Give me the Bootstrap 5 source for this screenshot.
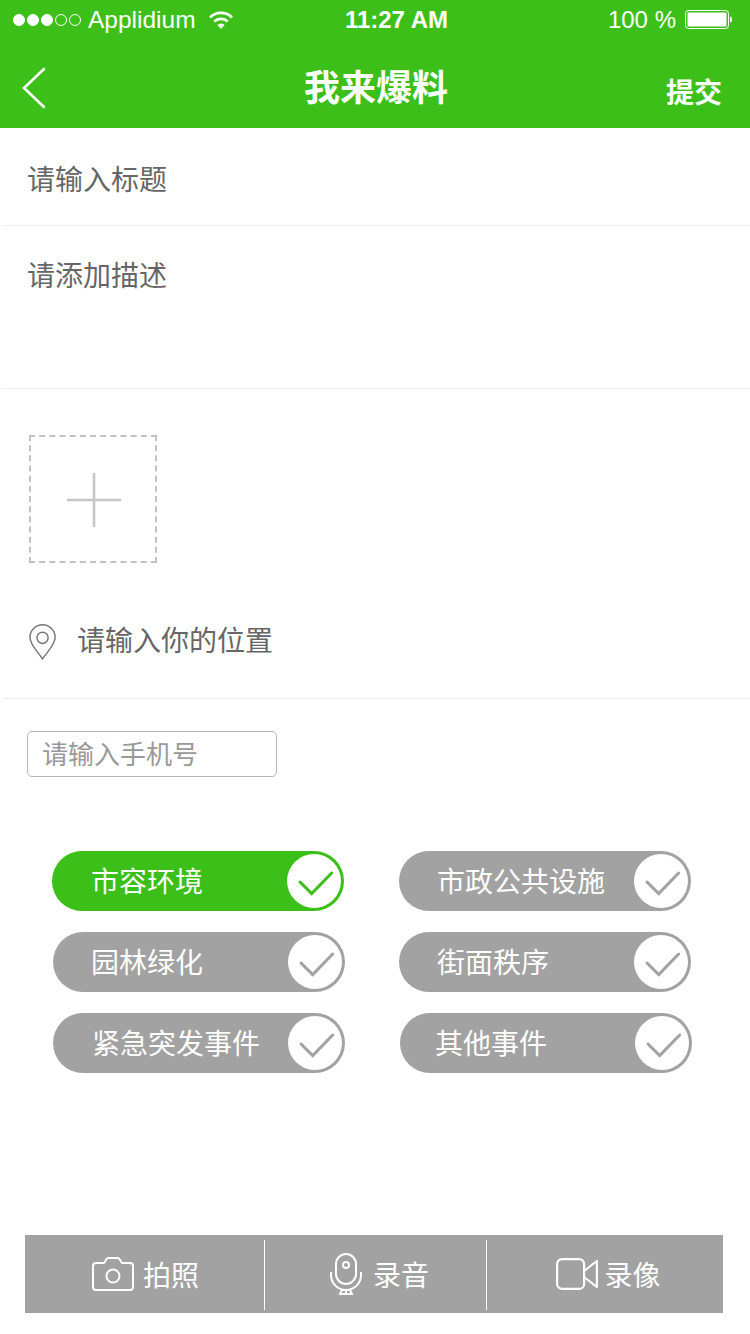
<!DOCTYPE html>
<html lang="zh-CN">
<head>
  <meta charset="UTF-8">
  <title>我来爆料</title>
  <link href="https://cdn.jsdelivr.net/npm/bootstrap@5.3.3/dist/css/bootstrap.min.css" rel="stylesheet">
  <style>
    :root { --leaf: #3dbf1a; --ash: #a2a2a2; }
    body { width: 750px; height: 1334px; overflow: hidden; background: #fff; color: #666;
      font-family: "Liberation Sans", "Noto Sans CJK SC", sans-serif; }
    .top-bar { height: 128px; background: var(--leaf); color: #fff; }
    .status-row { height: 40px; padding: 0 17px 0 13px; font-size: 24.5px; line-height: 40px; font-weight: 300; }
    .status-left { width: 327px; }
    .status-right { width: 280px; font-size: 24px; }
    .status-time { font-size: 24px; font-weight: 700; }
    .sig { width: 12px; height: 12px; border: 1px solid #fff; border-radius: 50%; margin-right: 2px; }
    .sig.on { background: #fff; }
    .carrier { margin-left: 5px; }
    .wifi-mark { margin-left: 12px; }
    .battery-label { margin-right: 9px; }
    .title-row { height: 88px; padding: 8px 29px 0 22px; }
    .title-row h1 { font-size: 36px; font-weight: 700; margin: 0; line-height: 40px; position: relative; top: 1px; }
    .submit-link { font-size: 28px; font-weight: 700; color: #fff; text-decoration: none; width: 55px; white-space: nowrap; position: relative; top: 6px; }
    .back-slot { width: 64px; }
    .field-line { border: 0; border-radius: 0; box-shadow: none !important; padding: 0; font-size: 28px; line-height: 36px; color: #666; background: transparent; }
    .field-line::placeholder { color: #666; opacity: 1; }
    .title-field { height: 98px; margin-left: 2px; padding: 35px 0 0 25px; border-bottom: 1px solid #eee; }
    .title-field .field-line { height: 36px; }
    .desc-field { height: 163px; margin-left: 2px; padding: 33px 0 0 25px; border-bottom: 1px solid #eee; }
    .desc-field .field-line { resize: none; height: 100px; }
    .upload-box { width: 128px; height: 128px; margin: 46px 0 0 29px; padding-top: 2px; border: 2px dashed #c2c2c2; }
    .plus-mark { margin-left: 2px; }
    .place-row { height: 136px; margin-left: 2px; padding: 22px 0 0 27px; border-bottom: 1px solid #eee; gap: 21px; }
    .place-row .field-line { height: 36px; }
    .phone-field { width: 250px; height: 46px; margin: 32px 0 0 27px; padding: 3px 14px 0; border: 1px solid #b5b5b5; border-radius: 5px; font-size: 26px; color: #999; box-shadow: none !important; }
    .phone-field::placeholder { color: #999; opacity: 1; }
    .pill-stack { margin-top: 74px; gap: 21px; }
    .pill-row { gap: 55px; padding-left: 53px; }
    .pill-row.first { padding-left: 52px; }
    .pill-row.tight { gap: 54px; }
    .tag-pill { width: 292px; height: 60px; border-radius: 30px; background: var(--ash); color: #fff; border: 0; padding: 0 3px 0 38px; font-size: 28px; line-height: 56px; }
    .tag-pill.picked { background: var(--leaf); padding-left: 39px; }
    .tag-pill.near { padding-left: 35px; }
    .tag-pill.far { padding-left: 39px; }
    .tag-text { padding-top: 4px; }
    .knob { width: 54px; height: 54px; border-radius: 50%; background: #fff; }
    .knob svg { display: block; stroke: var(--ash); }
    .picked .knob svg { stroke: var(--leaf); }
    .tool-bar { width: 698px; height: 78px; margin: 162px 0 0 25px; background: var(--ash); color: #fff; padding: 5px 0 3px; }
    .tool-item { gap: 9px; background: transparent; border: 0; color: #fff; font-size: 28px; line-height: 40px; padding: 0; }
    .tool-item span { padding-top: 4px; }
    .tool-item svg { margin-bottom: 2px; }
    .tool-item + .tool-item { border-left: 1px solid #fff; }
    .tool-one { width: 239px; padding-left: 2px; }
    .tool-two { width: 222px; padding-left: 8px; gap: 11px; }
    .tool-three { width: 237px; padding-left: 7px; gap: 6px; }
  </style>
</head>
<body>
  <header class="top-bar">
    <div class="status-row d-flex align-items-center justify-content-between">
      <div class="status-left d-flex align-items-center">
        <span class="sig on"></span><span class="sig on"></span><span class="sig on"></span><span class="sig"></span><span class="sig"></span>
        <span class="carrier">Applidium</span>
        <svg class="wifi-mark" width="26" height="20" viewBox="0 0 26 20" fill="none" stroke="#fff" stroke-width="2.6">
          <path d="M2 7.500a15.500 15.500 0 0 1 22 0"/>
          <path d="M6.300 11.600a9.500 9.500 0 0 1 13.400 0"/>
          <path d="M13 19l-3.600-4a5 5 0 0 1 7.200 0z" fill="#fff" stroke="none"/>
        </svg>
      </div>
      <div class="status-time">11:27 AM</div>
      <div class="status-right d-flex align-items-center justify-content-end">
        <span class="battery-label">100 %</span>
        <svg width="48" height="20" viewBox="0 0 48 20">
          <rect x=".5" y=".5" width="43" height="18" rx="3" fill="none" stroke="#fff"/>
          <rect x="2.500" y="2.500" width="39" height="14" rx="1" fill="#fff"/>
          <path d="M45 6.500c1.500 0 2 1.500 2 3s-.5 3-2 3z" fill="#fff"/>
        </svg>
      </div>
    </div>
    <nav class="title-row d-flex align-items-center justify-content-between">
      <a class="back-slot d-block" href="#" aria-label="返回">
        <svg class="d-block" width="24" height="42" viewBox="0 0 24 42" fill="none" stroke="#fff" stroke-width="2.6" stroke-linecap="round"><path d="M22 2 2 21l20 19"/></svg>
      </a>
      <h1>我来爆料</h1>
      <a class="submit-link" href="#">提交</a>
    </nav>
  </header>

  <form>
    <div class="title-field"><input class="form-control field-line" type="text" placeholder="请输入标题"></div>
    <div class="desc-field"><textarea class="form-control field-line" placeholder="请添加描述"></textarea></div>

    <div class="upload-box d-flex align-items-center justify-content-center">
      <svg class="plus-mark" width="54" height="54" viewBox="0 0 54 54" stroke="#c6c6c6" stroke-width="2.600"><path d="M27 0v54M0 27h54"/></svg>
    </div>

    <div class="place-row d-flex align-items-center">
      <svg width="29" height="38" viewBox="0 0 29 38" fill="none" stroke="#777" stroke-width="1.600">
        <path d="M14.500 37C9 29 1 22 1 14a13.500 13.500 0 0 1 27 0c0 8-8 15-13.500 23z"/>
        <circle cx="14.500" cy="14.500" r="6"/>
      </svg>
      <input class="form-control field-line" type="text" placeholder="请输入你的位置">
    </div>

    <input class="form-control phone-field" type="tel" placeholder="请输入手机号">

    <div class="pill-stack d-flex flex-column">
      <div class="pill-row first d-flex">
        <div class="tag-pill picked d-flex justify-content-between align-items-center"><span class="tag-text">市容环境</span><span class="knob"><svg width="54" height="54" viewBox="0 0 54 54" fill="none" stroke-width="3" stroke-linecap="round"><path d="M13 28l11.700 11.500L44.700 19"/></svg></span></div>
        <div class="tag-pill d-flex justify-content-between align-items-center"><span class="tag-text">市政公共设施</span><span class="knob"><svg width="54" height="54" viewBox="0 0 54 54" fill="none" stroke-width="3" stroke-linecap="round"><path d="M13 28l11.700 11.500L44.700 19"/></svg></span></div>
      </div>
      <div class="pill-row tight d-flex">
        <div class="tag-pill d-flex justify-content-between align-items-center"><span class="tag-text">园林绿化</span><span class="knob"><svg width="54" height="54" viewBox="0 0 54 54" fill="none" stroke-width="3" stroke-linecap="round"><path d="M13 28l11.700 11.500L44.700 19"/></svg></span></div>
        <div class="tag-pill d-flex justify-content-between align-items-center"><span class="tag-text">街面秩序</span><span class="knob"><svg width="54" height="54" viewBox="0 0 54 54" fill="none" stroke-width="3" stroke-linecap="round"><path d="M13 28l11.700 11.500L44.700 19"/></svg></span></div>
      </div>
      <div class="pill-row d-flex">
        <div class="tag-pill far d-flex justify-content-between align-items-center"><span class="tag-text">紧急突发事件</span><span class="knob"><svg width="54" height="54" viewBox="0 0 54 54" fill="none" stroke-width="3" stroke-linecap="round"><path d="M13 28l11.700 11.500L44.700 19"/></svg></span></div>
        <div class="tag-pill near d-flex justify-content-between align-items-center"><span class="tag-text">其他事件</span><span class="knob"><svg width="54" height="54" viewBox="0 0 54 54" fill="none" stroke-width="3" stroke-linecap="round"><path d="M13 28l11.700 11.500L44.700 19"/></svg></span></div>
      </div>
    </div>

    <div class="tool-bar d-flex">
      <button type="button" class="tool-item tool-one d-flex align-items-center justify-content-center">
        <svg width="42" height="34" viewBox="0 0 42 34" fill="none" stroke="#fff" stroke-width="2" stroke-linejoin="round">
          <path d="M4 6h8l3-4.500c.5-.5 1-.5 1.500-.5h9c.5 0 1 0 1.500.5L30 6h8c1.700 0 3 1.300 3 3v21c0 1.700-1.300 3-3 3H4c-1.700 0-3-1.300-3-3V9c0-1.700 1.300-3 3-3z"/>
          <circle cx="21" cy="19" r="6.500"/>
        </svg>
        <span>拍照</span>
      </button>
      <button type="button" class="tool-item tool-two d-flex align-items-center justify-content-center">
        <svg width="32" height="42" viewBox="0 0 32 42" fill="none" stroke="#fff" stroke-width="2">
          <rect x="6" y="1" width="20" height="30" rx="10"/>
          <circle cx="16" cy="12" r="3"/>
          <path d="M1 19v3a15 15 0 0 0 30 0v-3M16 36v4M10 41h12l-2-4h-8z"/>
        </svg>
        <span>录音</span>
      </button>
      <button type="button" class="tool-item tool-three d-flex align-items-center justify-content-center">
        <svg width="42" height="32" viewBox="0 0 42 32" fill="none" stroke="#fff" stroke-width="2.200" stroke-linejoin="round">
          <rect x="1.100" y="1.100" width="27" height="29.800" rx="5"/>
          <path d="M28 13 40.900 3v26L28 19"/>
        </svg>
        <span>录像</span>
      </button>
    </div>
  </form>
  <script src="https://cdn.jsdelivr.net/npm/bootstrap@5.3.3/dist/js/bootstrap.bundle.min.js"></script>
</body>
</html>
